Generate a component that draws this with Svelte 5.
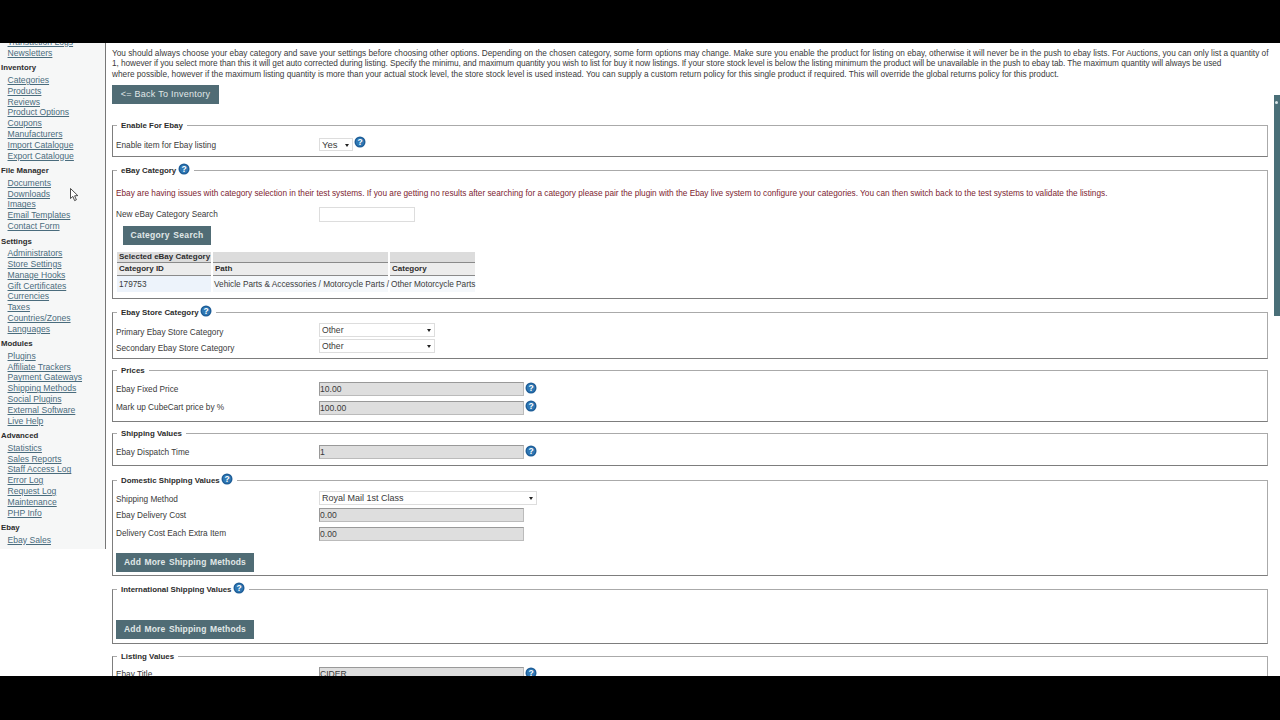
<script lang="ts">
	const nav = [
		{ title: '', links: ['Transaction Logs', 'Newsletters'] },
		{
			title: 'Inventory',
			links: ['Categories', 'Products', 'Reviews', 'Product Options', 'Coupons', 'Manufacturers', 'Import Catalogue', 'Export Catalogue']
		},
		{ title: 'File Manager', links: ['Documents', 'Downloads', 'Images', 'Email Templates', 'Contact Form'] },
		{
			title: 'Settings',
			links: ['Administrators', 'Store Settings', 'Manage Hooks', 'Gift Certificates', 'Currencies', 'Taxes', 'Countries/Zones', 'Languages']
		},
		{
			title: 'Modules',
			links: ['Plugins', 'Affiliate Trackers', 'Payment Gateways', 'Shipping Methods', 'Social Plugins', 'External Software', 'Live Help']
		},
		{
			title: 'Advanced',
			links: ['Statistics', 'Sales Reports', 'Staff Access Log', 'Error Log', 'Request Log', 'Maintenance', 'PHP Info']
		},
		{ title: 'Ebay', links: ['Ebay Sales'] }
	];
</script>

{#snippet help()}
	<svg class="help" viewBox="0 0 12 12" width="12" height="12" aria-hidden="true">
		<circle cx="6" cy="6" r="5.5" fill="#1d5c96" />
		<circle cx="6" cy="6" r="4.2" fill="#2f78b4" />
		<text x="6" y="9" text-anchor="middle" class="help-mark">?</text>
	</svg>
{/snippet}

{#snippet select(value: string, cls: string)}
	<span class="select {cls}">
		<select>
			<option>{value}</option>
		</select>
	</span>
{/snippet}

<div class="screen">
	<div class="page">
		<aside class="sidebar">
			<div class="nav-inner">
				{#each nav as group}
					<div class="group">
						{#if group.title}
							<h4>{group.title}</h4>
						{/if}
						{#each group.links as link}
							<a href="#top">{link}</a>
						{/each}
					</div>
				{/each}
			</div>
		</aside>

		<main class="content">
			<p class="intro">You should always choose your ebay category and save your settings before choosing other options. Depending on the chosen category, some form options may change. Make sure you enable the product for listing on ebay, otherwise it will never be in the push to ebay lists. For Auctions, you can only list a quantity of <span class="snug">1, however if you select more than this it will get auto corrected during listing. Specify the minimu, and maximum quantity you wish to list for buy it now listings. If your store stock level is below the listing minimum the product will be unavailable in the push to ebay tab. The maximum quantity will always be used</span><br />where possible, however if the maximum listing quantity is more than your actual stock level, the store stock level is used instead. You can supply a custom return policy for this single product if required. This will override the global returns policy for this product.</p>

			<button class="btn back">&lt;= Back To Inventory</button>

			<fieldset class="enable">
				<legend>Enable For Ebay</legend>
				<div class="row">
					<span class="label">Enable item for Ebay listing</span>
					{@render select('Yes', 'tiny')}
					{@render help()}
				</div>
			</fieldset>

			<fieldset class="category">
				<legend>eBay Category {@render help()}</legend>
				<p class="warn">Ebay are having issues with category selection in their test systems. If you are getting no results after searching for a category please pair the plugin with the Ebay live system to configure your categories. You can then switch back to the test systems to validate the listings.</p>
				<div class="row">
					<span class="label">New eBay Category Search</span>
					<input class="search" type="text" />
				</div>
				<button class="btn cat-btn">Category Search</button>
				<table>
					<thead>
						<tr class="head-top"><th>Selected eBay Category</th><th></th><th></th></tr>
						<tr class="head-sub"><th>Category ID</th><th>Path</th><th>Category</th></tr>
					</thead>
					<tbody>
						<tr><td class="id">179753</td><td>Vehicle Parts &amp; Accessories / Motorcycle Parts /</td><td>Other Motorcycle Parts</td></tr>
					</tbody>
				</table>
			</fieldset>

			<fieldset class="store">
				<legend>Ebay Store Category {@render help()}</legend>
				<div class="row tight">
					<span class="label">Primary Ebay Store Category</span>
					{@render select('Other', 'mid')}
				</div>
				<div class="row tight">
					<span class="label">Secondary Ebay Store Category</span>
					{@render select('Other', 'mid')}
				</div>
			</fieldset>

			<fieldset class="prices">
				<legend>Prices</legend>
				<div class="row wide">
					<span class="label">Ebay Fixed Price</span>
					<input class="grey" type="text" value="10.00" />
					{@render help()}
				</div>
				<div class="row wide">
					<span class="label">Mark up CubeCart price by %</span>
					<input class="grey" type="text" value="100.00" />
					{@render help()}
				</div>
			</fieldset>

			<fieldset class="shipping">
				<legend>Shipping Values</legend>
				<div class="row wide">
					<span class="label">Ebay Dispatch Time</span>
					<input class="grey" type="text" value="1" />
					{@render help()}
				</div>
			</fieldset>

			<fieldset class="domestic">
				<legend>Domestic Shipping Values {@render help()}</legend>
				<div class="row tight">
					<span class="label">Shipping Method</span>
					{@render select('Royal Mail 1st Class', 'large')}
				</div>
				<div class="row wide">
					<span class="label">Ebay Delivery Cost</span>
					<input class="grey" type="text" value="0.00" />
				</div>
				<div class="row wide">
					<span class="label">Delivery Cost Each Extra Item</span>
					<input class="grey" type="text" value="0.00" />
				</div>
				<button class="btn add">Add More Shipping Methods</button>
			</fieldset>

			<fieldset class="international">
				<legend>International Shipping Values {@render help()}</legend>
				<button class="btn add">Add More Shipping Methods</button>
			</fieldset>

			<fieldset class="listing">
				<legend>Listing Values</legend>
				<div class="row wide">
					<span class="label">Ebay Title</span>
					<input class="grey" type="text" value="CIDER" />
					{@render help()}
				</div>
			</fieldset>
		</main>

		<div class="slide-tab"><span></span></div>
		<svg class="cursor" viewBox="0 0 9 14" width="9" height="14" aria-hidden="true">
			<path d="M0.5 0.5 L0.5 10.5 L2.9 8.4 L4.6 12.6 L6.4 11.8 L4.6 7.8 L7.8 7.6 Z" fill="#fff" stroke="#222" stroke-width="0.8" />
		</svg>
	</div>
</div>

<style>
	:global(body) {
		margin: 0;
		background: #000;
	}

	.screen {
		height: 720px;
		box-sizing: border-box;
		padding: 43px 0 44px;
		background: #000;
		font-family: 'Liberation Sans', Arial, sans-serif;
		font-size: 8.26px;
		color: #3a3a3a;
	}

	.page {
		position: relative;
		display: flex;
		height: 633px;
		overflow: hidden;
		background: #fff;
	}

	.sidebar {
		width: 106px;
		flex: none;
		height: 506px;
		box-sizing: border-box;
		background: #f6f7f7;
		border-right: 1px solid #777;
	}

	.nav-inner {
		margin-top: -6px;
	}

	.group {
		margin-bottom: 3.9px;
	}

	.group h4 {
		margin: 0 0 1.6px;
		padding-left: 1px;
		font-size: 7.8px;
		line-height: 11px;
		font-weight: bold;
		color: #2c2c2c;
	}

	.group a {
		display: block;
		padding-left: 7.5px;
		font-size: 8.6px;
		line-height: 10.78px;
		color: #4a6c7d;
		text-decoration: underline;
		white-space: nowrap;
	}

	.content {
		flex: 1;
		min-width: 0;
		padding: 6px 12px 0 6px;
	}

	.intro {
		margin: 0 0 5px;
		line-height: 10.4px;
		width: 1160px;
	}

	.snug {
		letter-spacing: -0.06px;
	}

	.btn {
		display: block;
		border: 0;
		padding: 0 0 1px;
		height: 19px;
		background: #506c75;
		color: #e0e8e8;
		font-family: inherit;
		font-size: 9px;
		letter-spacing: 0.25px;
	}

	.back {
		width: 107px;
		margin-bottom: 16px;
	}

	.cat-btn {
		width: 88px;
		margin: 4px 0 7px 7px;
		font-size: 8.5px;
		font-weight: bold;
		letter-spacing: 0.3px;
		word-spacing: 1px;
	}

	.add {
		width: 138px;
		font-size: 8.5px;
		font-weight: bold;
		letter-spacing: 0.15px;
		word-spacing: 1px;
	}

	fieldset {
		margin: 0;
		padding: 0 3px;
		min-width: 0;
		border: 1px solid #aaa;
		border-left-color: #7d7d7d;
		border-bottom-color: #7d7d7d;
	}

	legend {
		display: flex;
		align-items: center;
		gap: 1.5px;
		margin-left: 1px;
		padding: 0 4px;
		height: 11px;
		font-size: 7.9px;
		font-weight: bold;
		color: #2c2c2c;
	}

	legend .help {
		margin-left: 0;
		margin-top: -3px;
	}

	.row {
		display: flex;
		align-items: center;
	}

	.label {
		width: 203px;
		flex: none;
	}

	.help {
		flex: none;
		margin-left: 1px;
		margin-top: -3px;
	}

	.help-mark {
		font-family: 'Liberation Sans', Arial, sans-serif;
		font-size: 8.5px;
		font-weight: bold;
		fill: #fff;
	}

	.select {
		position: relative;
		display: block;
		flex: none;
	}

	.select::after {
		content: '';
		position: absolute;
		top: 6px;
		right: 4px;
		border: 2.5px solid transparent;
		border-top: 3px solid #222;
		border-bottom: 0;
	}

	select {
		display: block;
		appearance: none;
		width: 100%;
		height: 100%;
		box-sizing: border-box;
		margin: 0;
		padding: 0 0 0 2px;
		background: #fff;
		border: 1px solid #ddd;
		border-radius: 0;
		font-family: inherit;
		font-size: 8.6px;
		color: #3a3a3a;
	}

	.tiny {
		width: 34px;
		height: 13px;
	}

	.tiny select {
		font-size: 9.5px;
	}

	.mid {
		width: 116px;
		height: 14px;
	}

	.large {
		width: 218px;
		height: 14px;
	}

	.large select {
		font-size: 9px;
	}

	input {
		box-sizing: border-box;
		margin: 0;
		padding: 0;
		border-radius: 0;
		font-family: inherit;
		font-size: 8.6px;
		color: #3a3a3a;
	}

	.grey {
		width: 205px;
		height: 14px;
		background: #dedede;
		border: 1px solid #999;
		border-right-color: #bbb;
		border-bottom-color: #bbb;
	}

	.search {
		width: 96px;
		height: 15px;
		background: #fff;
		border: 1px solid #ddd;
	}

	.wide {
		height: 18.5px;
	}

	.tight {
		height: 16px;
	}

	.tight .label {
		padding-top: 4px;
	}

	.enable {
		height: 35px;
		margin-bottom: 8px;
	}

	.enable .row {
		height: 13px;
		margin-top: 7px;
	}

	.enable .label {
		padding-top: 2px;
	}

	.enable .help {
		margin-top: -5px;
	}

	.warn {
		margin: 12px 0 8px;
		line-height: 11px;
		color: #7d2430;
		white-space: nowrap;
	}

	table {
		table-layout: fixed;
		width: 362px;
		border-collapse: separate;
		border-spacing: 2px 0;
		margin-left: -1px;
	}

	th {
		padding: 0 0 0 2px;
		text-align: left;
		font-size: 8px;
		color: #2c2c2c;
		background: #dcdcdc;
		white-space: nowrap;
	}

	th:nth-child(1) {
		width: 92px;
	}

	th:nth-child(2) {
		width: 173px;
	}

	.head-top th {
		height: 10px;
		line-height: 10px;
		border-bottom: 1px solid #8a8a8a;
	}

	.head-sub th {
		height: 12px;
		line-height: 12px;
		background: #ececec;
		border-bottom: 1px solid #8a8a8a;
	}

	td {
		height: 16px;
		padding: 0 0 0 1px;
		background: #f5f8fb;
		white-space: nowrap;
	}

	td.id {
		padding-left: 2px;
		background: #edf3fb;
	}

	.category {
		height: 132px;
		margin-bottom: 8px;
	}

	.store {
		height: 50px;
		margin-bottom: 6px;
	}

	.store .row:first-of-type {
		margin-top: 4px;
	}

	.prices {
		height: 51px;
		margin-bottom: 6px;
		padding-top: 4px;
	}

	.shipping {
		height: 32px;
		margin-bottom: 9px;
		padding-top: 4px;
	}

	.domestic {
		height: 95px;
		margin-bottom: 8px;
		padding-top: 4px;
	}

	.domestic .tight .label {
		padding-top: 2px;
	}

	.domestic .add {
		margin-top: 10px;
	}

	.international {
		height: 58px;
		margin-bottom: 7px;
	}

	.international .add {
		margin: 25px 0 0;
	}

	.listing {
		height: 80px;
		padding-top: 3px;
	}

	.slide-tab {
		position: absolute;
		right: 0;
		top: 52px;
		width: 6px;
		height: 221px;
		background: #4a6f78;
	}

	.slide-tab span {
		position: absolute;
		top: 6px;
		left: 1px;
		width: 3px;
		height: 3px;
		border-radius: 50%;
		background: #d8e4e6;
	}

	.cursor {
		position: absolute;
		left: 69.5px;
		top: 145px;
	}
</style>
